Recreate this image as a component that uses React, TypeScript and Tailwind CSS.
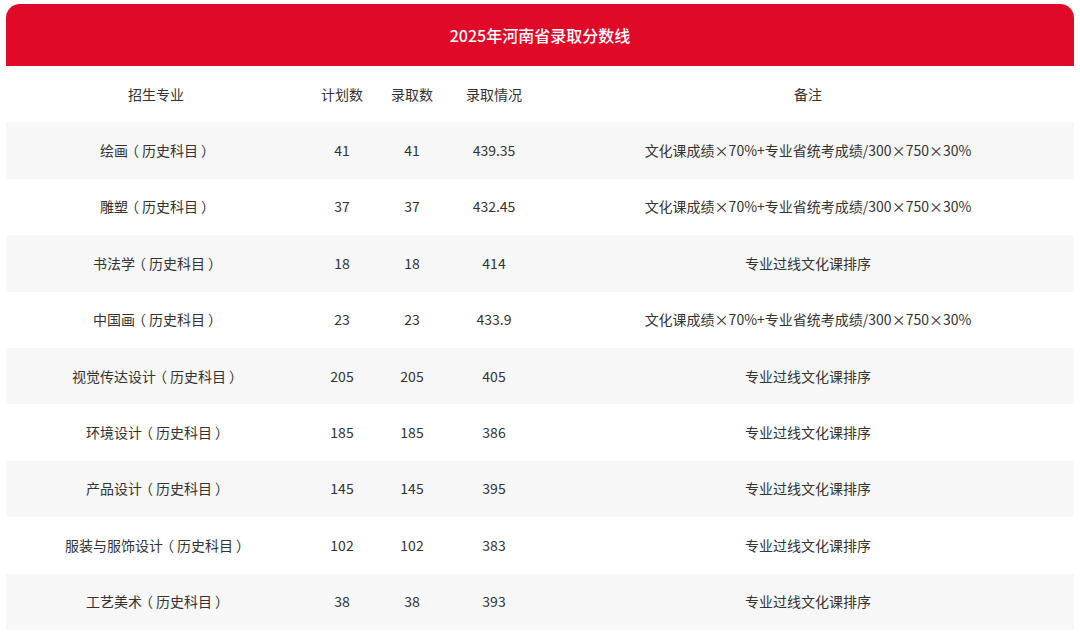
const rows = [
  { name: "绘画（历史科目）", plan: "41", admit: "41", score: "439.35", note: "文化课成绩×70%+专业省统考成绩/300×750×30%" },
  { name: "雕塑（历史科目）", plan: "37", admit: "37", score: "432.45", note: "文化课成绩×70%+专业省统考成绩/300×750×30%" },
  { name: "书法学（历史科目）", plan: "18", admit: "18", score: "414", note: "专业过线文化课排序" },
  { name: "中国画（历史科目）", plan: "23", admit: "23", score: "433.9", note: "文化课成绩×70%+专业省统考成绩/300×750×30%" },
  { name: "视觉传达设计（历史科目）", plan: "205", admit: "205", score: "405", note: "专业过线文化课排序" },
  { name: "环境设计（历史科目）", plan: "185", admit: "185", score: "386", note: "专业过线文化课排序" },
  { name: "产品设计（历史科目）", plan: "145", admit: "145", score: "395", note: "专业过线文化课排序" },
  { name: "服装与服饰设计（历史科目）", plan: "102", admit: "102", score: "383", note: "专业过线文化课排序" },
  { name: "工艺美术（历史科目）", plan: "38", admit: "38", score: "393", note: "专业过线文化课排序" },
];

const font = { fontFamily: '"Noto Sans CJK SC", "Noto Sans", sans-serif' };

// the source draws fullwidth parens centred in their box:
// halve them with 'halt' and pad back to a full em
function Name({ text }: { text: string }) {
  return (
    <>
      {text.split(/([（）])/).map((part, i) =>
        part === "（" ? (
          <span key={i} className="inline-block pl-[4px] pr-[3px] [font-feature-settings:'halt']">{part}</span>
        ) : part === "）" ? (
          <span key={i} className="inline-block pl-[3px] pr-[4px] [font-feature-settings:'halt']">{part}</span>
        ) : (
          <span key={i}>{part}</span>
        )
      )}
    </>
  );
}

function Row({ cells, shaded }: { cells: string[]; shaded: boolean }) {
  return (
    <div className={`flex h-[56.4px] items-center text-[14px] text-[#333] ${shaded ? "bg-[#f7f7f7]" : "bg-white"}`}>
      <div className="w-[300px] text-center"><Name text={cells[0]} /></div>
      <div className="w-[72px] text-center">{cells[1]}</div>
      <div className="w-[68px] text-center">{cells[2]}</div>
      <div className="w-[96px] text-center">{cells[3]}</div>
      <div className="flex-1 text-center">{cells[4]}</div>
    </div>
  );
}

export default function App() {
  return (
    <div className="w-[1080px] h-[636px] bg-white overflow-hidden pt-[4px] px-[6px]" style={font}>
      <div className="h-[62px] rounded-t-[14px] bg-[#e00a28] flex items-center justify-center">
        <h1 className="text-[16px] font-medium text-white">2025年河南省录取分数线</h1>
      </div>
      <Row cells={["招生专业", "计划数", "录取数", "录取情况", "备注"]} shaded={false} />
      {rows.map((r, i) => (
        <Row key={r.name} cells={[r.name, r.plan, r.admit, r.score, r.note]} shaded={i % 2 === 0} />
      ))}
    </div>
  );
}
